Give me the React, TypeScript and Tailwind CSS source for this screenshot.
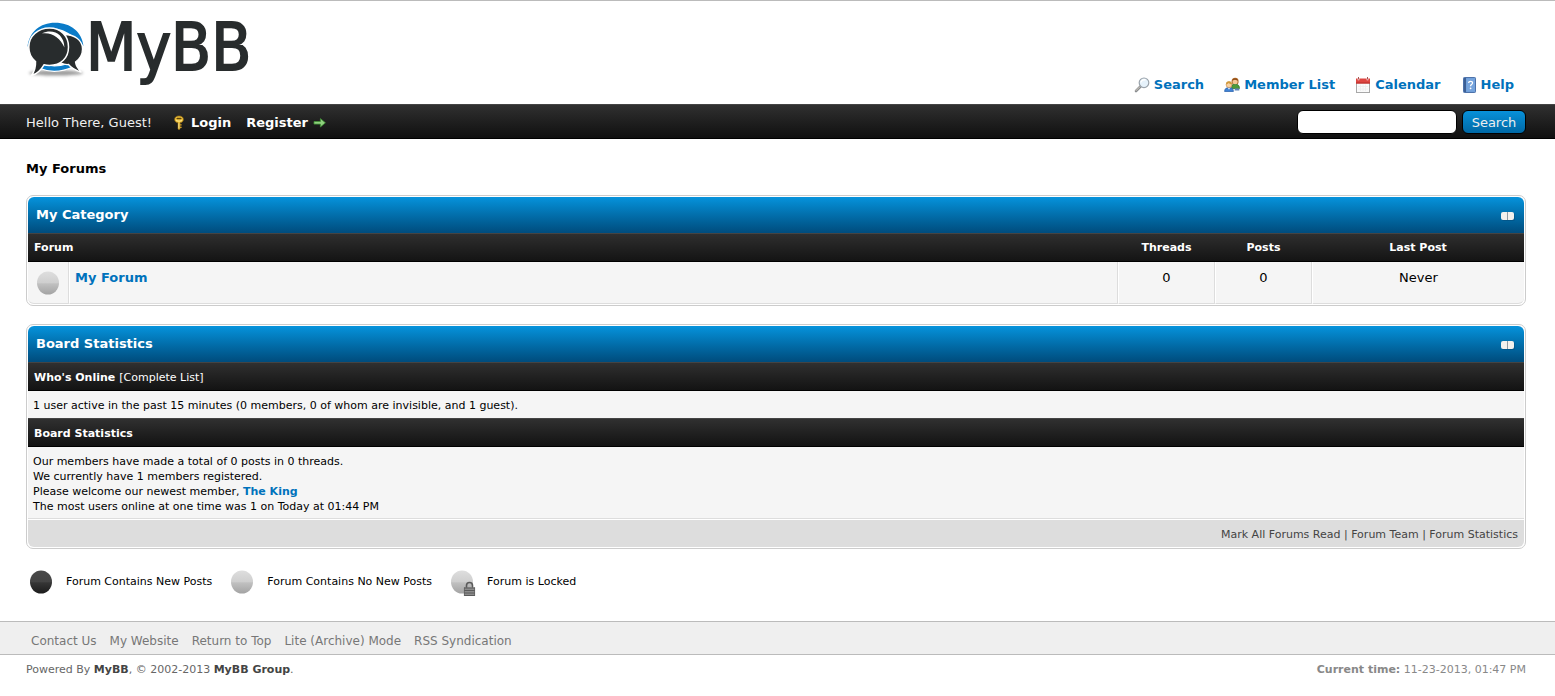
import type { ReactNode } from "react";

function Logo() {
  return (
    <svg width="230" height="72" viewBox="0 0 230 72" role="img" aria-label="MyBB" className="overflow-visible">
      <defs>
        <filter id="logoShadow" x="-20%" y="-100%" width="140%" height="300%">
          <feGaussianBlur stdDeviation="1.8" />
        </filter>
      </defs>
      <ellipse cx="30" cy="54" rx="27" ry="2.6" fill="#777" opacity=".75" filter="url(#logoShadow)" />
      <path d="M1.5 28 C3 13 14 3.7 29 3.7 C45 3.7 56 13 57.5 27 C54 22 50 18 44 15 C38 10.6 29 8.6 22 9 C12 10.6 5 17 1.5 28Z" fill="#0a7bc8" />
      <path d="M16 45 Q30 49 44 44 L48 47.5 Q30 56 14 49.5Z" fill="#0a7bc8" stroke="#fff" strokeWidth="1.2" />
      <path d="M38 15.5 C49 15.5 56.5 21.5 56.5 30 C56.5 36 53 40.5 49.5 43 Q50 48 55.5 53.5 Q46 50 42.5 45.5 C37 46 33 43 31 39Z" fill="#282c2d" stroke="#fff" strokeWidth="1.3" />
      <path d="M23.5 9 C35 9 42.5 17 42.5 28 C42.5 39 35 46.4 23.5 46.4 Q20.5 46.4 18 45.8 Q13 54.5 5.5 56.5 Q10 50 9.5 42.5 C5 39 2.8 33.5 2.8 28 C2.8 17 12 9 23.5 9Z" fill="#282c2d" stroke="#fff" strokeWidth="1.5" />
      <path d="M16 14.4 C27 9.4 38 15 38.4 28.5 C34.5 19 26 13 16 14.4Z" fill="#fff" />
      <text
        x="60"
        y="51"
        fontFamily="'DejaVu Sans Condensed', 'DejaVu Sans', sans-serif"
        fontSize="65"
        fill="#282c2d"
        stroke="#282c2d"
        strokeWidth="1.8"
      >
        MyBB
      </text>
    </svg>
  );
}

function SearchIcon() {
  return (
    <svg width="16" height="16" viewBox="0 0 16 16" aria-hidden="true">
      <path d="M2 14 L6.5 9.5" stroke="#8a8d90" strokeWidth="2.6" strokeLinecap="round" />
      <path d="M2 13.6 L6 9.6" stroke="#d8d0c4" strokeWidth="1" strokeLinecap="round" />
      <circle cx="10" cy="5.8" r="4.8" fill="#e6f2fb" stroke="#9aa3ab" strokeWidth="1.2" />
      <path d="M7 5.5 A3.2 3.2 0 0 1 11.5 3" fill="none" stroke="#fff" strokeWidth="1.4" />
    </svg>
  );
}

function MembersIcon() {
  return (
    <svg width="16" height="16" viewBox="0 0 16 16" aria-hidden="true">
      <path d="M7.5 10 Q7.5 7 11 7 Q15.5 7 15.5 11.5 L8 11.5Z" fill="#4d9a3a" stroke="#2f6d22" strokeWidth=".7" />
      <path d="M7.6 4.5 Q7.6 .8 11.2 .8 Q14.8 .8 14.6 5 L14 7 L8.4 7Z" fill="#b06a28" />
      <circle cx="11.1" cy="4.7" r="2.5" fill="#f5c797" />
      <path d="M8.6 3.8 Q11 1.8 13.6 4 L13.4 2.6 Q11 .6 8.8 2.6Z" fill="#8c4a18" />
      <path d="M.6 14.5 Q.6 10.6 5 10.6 Q9.4 10.6 9.4 14.5Z" fill="#3f83d6" stroke="#245ca8" strokeWidth=".7" />
      <path d="M3.9 10.7 L5 12.8 L6.1 10.7Z" fill="#fff" />
      <circle cx="5" cy="7.7" r="2.9" fill="#f9d2a2" stroke="#b9783c" strokeWidth=".5" />
      <path d="M2 7.5 Q2 4.2 5 4.2 Q8 4.2 8 7.5 Q5.5 7 4.8 5.9 Q3.6 7 2 7.5Z" fill="#d09a3c" />
      <path d="M11 11.6 L15.3 11.6 L15.3 13.5 L10.6 13.5Z" fill="#5f86b8" />
    </svg>
  );
}

function CalendarIcon() {
  return (
    <svg width="16" height="16" viewBox="0 0 16 16" aria-hidden="true">
      <rect x="1.5" y="2.5" width="13" height="13" fill="#fafafa" stroke="#a8a8a8" />
      <path d="M3 9.5H13M3 12H13M5.5 7.5V14M8 7.5V14M10.5 7.5V14" stroke="#ececec" strokeWidth=".8" />
      <path d="M1 1.5H15V6.5H1Z" fill="#dd4540" />
      <path d="M1 5.5H15V6.5H1Z" fill="#b52c28" />
      <path d="M3.5 0V3.2M12.5 0V3.2" stroke="#fff" strokeWidth="1.6" />
      <path d="M3.5 0V2.5M12.5 0V2.5" stroke="#8c2a27" strokeWidth=".8" />
    </svg>
  );
}

function HelpIcon() {
  return (
    <svg width="16" height="16" viewBox="0 0 16 16" aria-hidden="true">
      <rect x="2.5" y=".5" width="12" height="15" rx=".8" fill="#6c9bd6" stroke="#4d72aa" />
      <path d="M3 1H5V15H3Z" fill="#3c5f95" />
      <path d="M5.4 1.4H14V14.6H5.4Z" fill="#76a4dd" />
      <path d="M7.6 6 Q7.7 4.4 9.6 4.4 Q11.6 4.4 11.5 6 Q11.4 7 10.2 7.7 Q9.6 8.2 9.6 9.2" fill="none" stroke="#fff" strokeWidth="1.3" />
      <circle cx="9.6" cy="11.3" r=".9" fill="#fff" />
    </svg>
  );
}

function KeyIcon() {
  return (
    <svg width="16" height="16" viewBox="0 0 16 16" aria-hidden="true">
      <path d="M8 .9 C10.8 .9 12.4 2.3 12.4 4.4 C12.4 6.3 11 7.4 9.1 7.8 V13.6 L8 15 L7 13.8 V7.8 C5 7.4 3.6 6.3 3.6 4.4 C3.6 2.3 5.2 .9 8 .9Z" fill="#f0c23b" stroke="#8d6512" strokeWidth=".7" />
      <path d="M6.2 3.4H9.8" stroke="#5d430c" strokeWidth="1.5" strokeLinecap="round" />
      <path d="M5 5.5 Q8 7 11 5.5" stroke="#fbe48c" fill="none" />
      <path d="M9.1 9.3H10.6V10.5H9.1M9.1 11.7H10.6V12.9H9.1" fill="#d9a528" />
      <path d="M7.8 8.2V13.4" stroke="#fbe89c" strokeWidth=".8" />
    </svg>
  );
}

function ArrowIcon() {
  return (
    <svg width="16" height="16" viewBox="0 0 16 16" aria-hidden="true">
      <path d="M2 6.5H8.4V3.6L13.4 7.8L8.4 12V9.1H2Z" fill="#8fd07e" stroke="#3f8f35" strokeWidth=".8" strokeLinejoin="round" />
    </svg>
  );
}

function Orb({ kind }: { kind: "on" | "off" | "lock" }) {
  const dark = kind === "on";
  const id = "orb-" + kind;
  return (
    <svg width="28" height="28" viewBox="0 0 28 28" aria-hidden="true" className="block shrink-0">
      <defs>
        <linearGradient id={id} x1="0" y1="0" x2="0" y2="1">
          <stop offset="0" stopColor={dark ? "#4a4a4a" : "#dedede"} />
          <stop offset=".48" stopColor={dark ? "#444" : "#cfcfcf"} />
          <stop offset=".54" stopColor={dark ? "#353535" : "#c0c0c0"} />
          <stop offset="1" stopColor={dark ? "#1c1c1c" : "#a3a3a3"} />
        </linearGradient>
      </defs>
      <ellipse cx="13" cy="14" rx="11" ry="11.5" fill={`url(#${id})`} />
      {kind === "lock" && (
        <g>
          <path d="M17.5 20V17.5A2.6 2.6 0 0 1 23.5 17.5V20" fill="none" stroke="#5a5a5a" strokeWidth="1.6" />
          <rect x="15" y="19.5" width="11" height="8.5" fill="#8c8c8c" />
          <path d="M15 20H26M15 22.5H26M15 25H26M15 27.5H26" stroke="#555" strokeWidth=".9" />
          <path d="M15.4 19.5V28M25.6 19.5V28" stroke="#606060" strokeWidth=".8" />
        </g>
      )}
    </svg>
  );
}

function CollapseButton({ label }: { label: string }) {
  return (
    <button type="button" aria-label={label} className="block h-4 w-4">
      <svg width="16" height="16" viewBox="0 0 16 16" aria-hidden="true">
        <rect x="2" y="6" width="13" height="8" rx="2" fill="#0a3f66" opacity=".35" />
        <rect x="1" y="5" width="13" height="8" rx="2" fill="#f4f1ed" />
        <path d="M7.5 5V13" stroke="#8f9aa3" />
      </svg>
    </button>
  );
}

function TitleBar({ children }: { children: string }) {
  return (
    <div className="flex h-9 items-center justify-between rounded-t-[6px] bg-linear-to-b from-[#0693dc] to-[#004c7d] pr-2 pl-2 text-[13px] text-white">
      <h2 className="pb-px font-bold">{children}</h2>
      <CollapseButton label={"Collapse " + children} />
    </div>
  );
}

const bar = "h-[29px] border-t border-b border-t-[#444] border-b-black px-[6px] pt-[2px] font-bold text-white";
const barBg = "bg-linear-to-b from-[#303030] to-[#131313]";

function Panel({ children }: { children: ReactNode }) {
  return <section className="rounded-[7px] border border-[#ccc] bg-white p-px">{children}</section>;
}

const topLinks = [
  { text: "Search", icon: <SearchIcon /> },
  { text: "Member List", icon: <MembersIcon /> },
  { text: "Calendar", icon: <CalendarIcon /> },
  { text: "Help", icon: <HelpIcon /> },
];

const footerLinks = ["Contact Us", "My Website", "Return to Top", "Lite (Archive) Mode", "RSS Syndication"];

export default function App() {
  return (
    <div className="min-h-screen border-t border-[#bbb] bg-white font-['DejaVu_Sans',sans-serif] text-[13px] text-black">
      <header className="flex h-[103px] items-end justify-between pr-[41px] pl-[26px]">
        <a href="#" className="mb-[13px] block">
          <Logo />
        </a>
        <nav className="mb-[9px] flex gap-5">
          {topLinks.map((l) => (
            <a key={l.text} href="#" className="flex items-center gap-1 leading-5 font-bold text-[#0072bc]">
              {l.icon}
              {l.text}
            </a>
          ))}
        </nav>
      </header>

      <div className="flex h-[35px] items-center justify-between border-t border-b border-t-[#444] border-b-black bg-linear-to-b from-[#303030] to-[#101010] pr-[29px] pl-[26px] text-white">
        <div className="flex items-center pt-[2px]">
          <span className="text-[#efefef]">Hello There, Guest!</span>
          <a href="#" className="ml-[19px] flex items-center gap-1 font-bold">
            <KeyIcon />
            Login
          </a>
          <a href="#" className="ml-[15px] flex items-center gap-1 font-bold">
            Register
            <ArrowIcon />
          </a>
        </div>
        <form className="flex items-center gap-[5px]" onSubmit={(e) => e.preventDefault()}>
          <input type="text" aria-label="Search keywords" className="h-6 w-40 rounded-[6px] border border-black bg-white px-1 text-black outline-none" />
          <button type="submit" className="h-6 w-16 rounded-[6px] border border-black bg-linear-to-b from-[#0891da] to-[#0068a5] pt-[2px] text-[#eee]">
            Search
          </button>
        </form>
      </div>

      <main className="pr-[29px] pl-[26px]">
        <h1 className="pt-5 pb-4 leading-5 font-bold">My Forums</h1>

        <Panel>
          <TitleBar>My Category</TitleBar>
          <table className="w-full table-fixed border-separate border-spacing-0 text-center">
            <colgroup>
              <col className="w-[41px]" />
              <col />
              <col className="w-[97px]" />
              <col className="w-[97px]" />
              <col className="w-[212px]" />
            </colgroup>
            <thead className="text-[11px]">
              <tr className={barBg}>
                <th colSpan={2} className={bar + " text-left"}>Forum</th>
                <th className={bar}>Threads</th>
                <th className={bar}>Posts</th>
                <th className={bar}>Last Post</th>
              </tr>
            </thead>
            <tbody>
              <tr className="h-[42px] bg-[#f5f5f5] align-top">
                <td className="rounded-bl-[6px] border-r border-b border-[#ddd] pt-[7px] pl-[7px]">
                  <Orb kind="off" />
                </td>
                <td className="border-r border-b border-l border-[#ddd] border-l-white px-[5px] pt-[6px] text-left leading-5 font-bold">
                  <a href="#" className="text-[#0072bc]">My Forum</a>
                </td>
                <td className="border-r border-b border-l border-[#ddd] border-l-white pt-[6px] leading-5">0</td>
                <td className="border-r border-b border-l border-[#ddd] border-l-white pt-[6px] leading-5">0</td>
                <td className="rounded-br-[6px] border-b border-l border-[#ddd] border-l-white pt-[6px] leading-5">Never</td>
              </tr>
            </tbody>
          </table>
        </Panel>

        <div className="mt-[18px] text-[11px] leading-[15px]">
          <Panel>
            <TitleBar>Board Statistics</TitleBar>
            <div className={"flex items-center gap-1 " + bar + " " + barBg}>
              <h3>Who's Online</h3>
              <span className="font-normal">[<a href="#">Complete List</a>]</span>
            </div>
            <p className="bg-[#f5f5f5] px-[5px] pt-[7px] pb-[5px]">
              1 user active in the past 15 minutes (0 members, 0 of whom are invisible, and 1 guest).
            </p>
            <h3 className={"flex items-center " + bar + " " + barBg}>Board Statistics</h3>
            <p className="border-b border-[#ddd] bg-[#f5f5f5] px-[5px] pt-[7px] pb-1">
              Our members have made a total of 0 posts in 0 threads.
              <br />
              We currently have 1 members registered.
              <br />
              Please welcome our newest member, <a href="#" className="font-bold text-[#0072bc]">The King</a>
              <br />
              The most users online at one time was 1 on Today at 01:44 PM
            </p>
            <div className="rounded-b-[6px] border-t border-white bg-[#ddd] px-[6px] pt-[7px] pb-[5px] text-right text-[#444]">
              <a href="#">Mark All Forums Read</a> | <a href="#">Forum Team</a> | <a href="#">Forum Statistics</a>
            </div>
          </Panel>
        </div>

        <ul className="mt-[19px] mb-[25px] flex items-center gap-[17px] pl-[2px] text-[11px]">
          <li className="flex items-center gap-[10px]"><Orb kind="on" />Forum Contains New Posts</li>
          <li className="flex items-center gap-[10px]"><Orb kind="off" />Forum Contains No New Posts</li>
          <li className="flex items-center gap-[10px]"><Orb kind="lock" />Forum is Locked</li>
        </ul>
      </main>

      <footer>
        <nav className="flex h-[34px] items-center gap-[13px] border-t border-b border-[#bbb] bg-[#efefef] pt-[5px] pl-[31px] text-[12px] text-[#777]">
          {footerLinks.map((l) => (
            <a key={l} href="#">{l}</a>
          ))}
        </nav>
        <div className="flex justify-between pt-[7px] pr-[29px] pl-[26px] text-[11px] leading-[15px] text-[#666]">
          <p>
            Powered By <a href="#" className="font-bold text-[#444]">MyBB</a>, © 2002-2013 <a href="#" className="font-bold text-[#444]">MyBB Group</a>.
          </p>
          <p className="text-[#888]"><strong>Current time:</strong> 11-23-2013, 01:47 PM</p>
        </div>
      </footer>
    </div>
  );
}
